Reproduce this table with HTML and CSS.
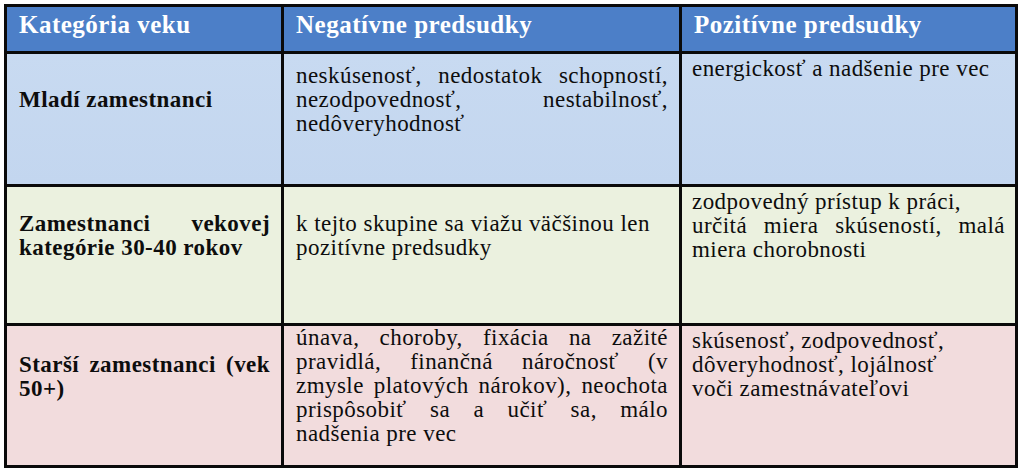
FILE: index.html
```html
<!DOCTYPE html>
<html lang="sk">
<head>
<meta charset="utf-8">
<title>Predsudky podľa veku</title>
<link rel="stylesheet" href="styles.css">
</head>
<body>
<div class="table">
  <div class="cell head">Kategória veku</div>
  <div class="cell head">Negatívne predsudky</div>
  <div class="cell head">Pozitívne predsudky</div>

  <div class="cell cat blue">Mladí zamestnanci</div>
  <div class="cell mid blue">neskúsenosť, nedostatok schopností, nezodpovednosť, nestabilnosť, nedôveryhodnosť</div>
  <div class="cell top blue">energickosť a nadšenie pre vec</div>

  <div class="cell cat green">Zamestnanci vekovej kategórie 30-40 rokov</div>
  <div class="cell mid green">k tejto skupine sa viažu väčšinou len<br>pozitívne predsudky</div>
  <div class="cell top green">zodpovedný prístup k práci,<br>určitá miera skúseností, malá miera chorobnosti</div>

  <div class="cell cat pink">Starší zamestnanci (vek 50+)</div>
  <div class="cell mid pink tight">únava, choroby, fixácia na zažité pravidlá, finančná náročnosť (v zmysle platových nárokov), neochota prispôsobiť sa a&nbsp;učiť sa, málo nadšenia pre vec</div>
  <div class="cell top pink">skúsenosť, zodpovednosť,<br>dôveryhodnosť, lojálnosť<br>voči zamestnávateľovi</div>
</div>
</body>
</html>
```
FILE: styles.css
```css
html, body {
  margin: 0;
  padding: 0;
  background: #ffffff;
}

body {
  font-family: "Liberation Serif", "Times New Roman", serif;
  color: #0d0d0d;
}

.table {
  display: grid;
  grid-template-columns: 274px 395px 333px;
  grid-template-rows: 44px 130px 136px 139px;
  gap: 3px;
  padding: 3px;
  margin: 4px 0 0 4px;
  width: max-content;
  background: #0a0a0a;
}

.cell {
  box-sizing: border-box;
  display: flex;
  flex-direction: column;
  font-size: 23px;
  line-height: 24px;
  letter-spacing: 0.45px;
  text-align: justify;
  padding: 0 11px 0 12px;
  overflow: hidden;
}

.head {
  background: #4c7fc8;
  color: #ffffff;
  font-weight: bold;
  font-size: 25px;
  letter-spacing: 0.5px;
  justify-content: center;
  padding-bottom: 9px;
  text-align: left;
}

.cat {
  font-weight: bold;
  justify-content: center;
  padding-bottom: 38px;
}

.mid {
  justify-content: center;
  padding-bottom: 38px;
}

.mid.tight {
  justify-content: flex-start;
  padding-top: 0;
  padding-bottom: 0;
}

.top {
  justify-content: flex-start;
  padding: 3px 10px 0 10px;
}

.blue {
  background: linear-gradient(#c8daf1, #c3d6ef);
}

.green {
  background: #ebf1df;
}

.pink {
  background: #f2dcdd;
}
```
